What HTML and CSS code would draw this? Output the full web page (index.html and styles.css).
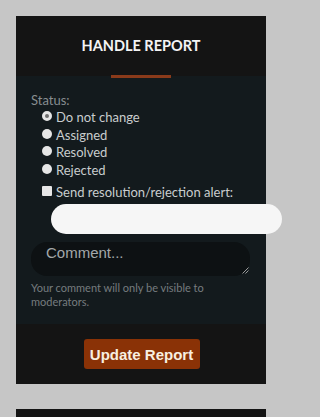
FILE: index.html
```html
<!DOCTYPE html>
<html>
<head>
<meta charset="utf-8">
<link rel="stylesheet" href="styles.css">
</head>
<body>
<div class="panel">
  <div class="panel-head">
    <h2 class="title">HANDLE REPORT</h2>
    <span class="underline"></span>
  </div>
  <form class="panel-body">
    <div class="label">Status:</div>
    <div class="options">
      <label class="opt"><span class="radio checked"></span>Do not change</label>
      <label class="opt"><span class="radio"></span>Assigned</label>
      <label class="opt"><span class="radio"></span>Resolved</label>
      <label class="opt"><span class="radio"></span>Rejected</label>
      <label class="opt check-row"><span class="checkbox"></span>Send resolution/rejection alert:</label>
    </div>
    <div class="pill"></div>
    <div class="comment"><span class="placeholder">Comment...</span>
      <svg class="grip" width="7" height="7" viewBox="0 0 7 7"><path d="M6.5 0.5 L0.5 6.5 M6.5 3.5 L3.5 6.5" stroke="#9a9a9a" stroke-width="1" fill="none"/></svg>
    </div>
    <p class="note">Your comment will only be visible to moderators.</p>
  </form>
  <div class="panel-foot">
    <button type="button" class="btn">Update Report</button>
  </div>
</div>
<div class="panel next"></div>
</body>
</html>
```
FILE: styles.css
```css
html {
  margin: 0;
  padding: 0;
  width: 283px;
  height: 417px;
  overflow: hidden;
}
body {
  margin: 0;
  width: 283px;
  height: 417px;
  overflow: hidden;
  background: #c6c6c6;
  padding: 16px 0 0 16px;
  font-family: Lato, "Liberation Sans", sans-serif;
  box-sizing: border-box;
}
.panel {
  width: 250px;
  background: #141414;
}
.panel.next {
  margin-top: 25px;
  height: 8px;
}
.panel-head {
  height: 60px;
  display: flex;
  flex-direction: column;
  align-items: center;
  position: relative;
}
.title {
  margin: 0;
  padding-top: 22px;
  font-size: 14.5px;
  font-weight: 700;
  color: #f4f4f4;
  line-height: 16px;
}
.underline {
  position: absolute;
  bottom: -2px;
  left: 95px;
  width: 60px;
  height: 3px;
  background: #8a3a1a;
  z-index: 2;
}
.panel-body {
  background: #131a1d;
  margin: 0;
  padding: 15px 15px 16px 15px;
  height: 248px;
  box-sizing: border-box;
}
.label {
  color: #878d90;
  font-size: 13px;
  line-height: 18px;
}
.options {
  padding-left: 11px;
}
.opt {
  display: flex;
  align-items: center;
  color: #c9cdce;
  font-size: 13px;
  line-height: 17.6px;
}
.radio {
  width: 10px;
  height: 10px;
  border-radius: 50%;
  background: #e6e6e6;
  margin-right: 4px;
  margin-top: -3px;
  box-sizing: border-box;
  display: inline-block;
  flex: none;
}
.radio.checked {
  border: 3px solid #e6e6e6;
  background: #6e6e6e;
}
.check-row {
  margin-top: 5px;
}
.checkbox {
  width: 10px;
  height: 10px;
  background: #e6e6e6;
  border-radius: 1px;
  margin-right: 4px;
  margin-top: -5px;
  flex: none;
}
.pill {
  margin-top: 2px;
  margin-left: 20px;
  width: 231px;
  height: 30px;
  border-radius: 15px;
  background: #f6f6f6;
}
.comment {
  margin-top: 8px;
  width: 219px;
  height: 34px;
  border-radius: 16px;
  background: #0d1113;
  position: relative;
  box-sizing: border-box;
  padding: 0 0 0 15px;
}
.placeholder {
  font-family: "Liberation Sans", Arial, sans-serif;
  font-size: 15px;
  color: #a3a8aa;
  line-height: 17px;
}
.grip {
  position: absolute;
  right: 1px;
  bottom: 2px;
}
.note {
  margin: 5px 0 0 0;
  font-size: 11px;
  line-height: 14px;
  color: #767c7f;
}
.panel-foot {
  height: 60px;
  display: flex;
  align-items: center;
  justify-content: center;
}
.btn {
  border: none;
  background: #8a3206;
  color: #f8efe0;
  font-family: "Liberation Sans", Arial, sans-serif;
  font-weight: 700;
  font-size: 15px;
  width: 116px;
  height: 30px;
  border-radius: 3px;
  padding: 0;
  margin-left: 1px;
}
```
